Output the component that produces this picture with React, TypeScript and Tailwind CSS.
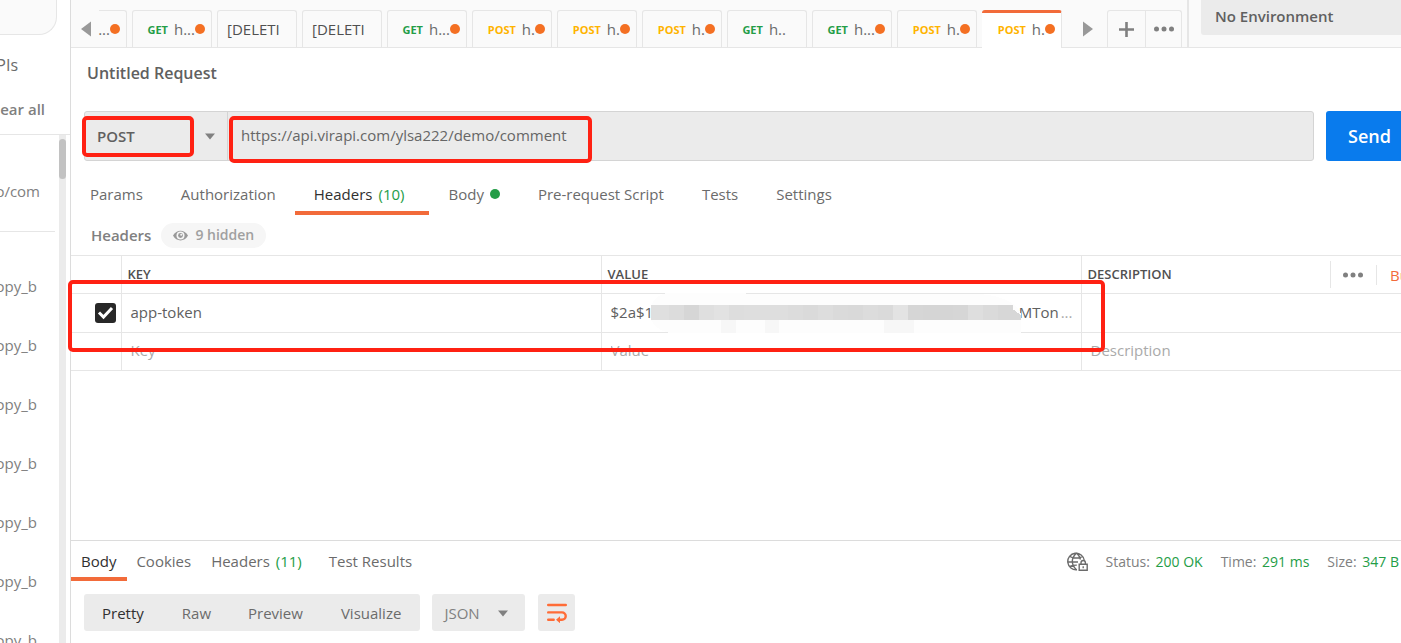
import type { ReactNode } from "react";

type Tab = { method?: "GET" | "POST"; label: string; unsaved?: boolean; active?: boolean };

const tabs: Tab[] = [
  { method: "GET", label: "h...", unsaved: true },
  { label: "[DELETI" },
  { label: "[DELETI" },
  { method: "GET", label: "h...", unsaved: true },
  { method: "POST", label: "h.", unsaved: true },
  { method: "POST", label: "h.", unsaved: true },
  { method: "POST", label: "h.", unsaved: true },
  { method: "GET", label: "h.." },
  { method: "GET", label: "h...", unsaved: true },
  { method: "POST", label: "h.", unsaved: true },
  { method: "POST", label: "h.", unsaved: true, active: true },
];

const history = ["opy_b", "opy_b", "opy_b", "opy_b", "opy_b", "opy_b", "opy_b"];

function Dots() {
  return (
    <svg width="20" height="6" viewBox="0 0 20 6" fill="#808080" aria-hidden="true">
      <circle cx="2.5" cy="3" r="2.5" />
      <circle cx="10" cy="3" r="2.5" />
      <circle cx="17.5" cy="3" r="2.5" />
    </svg>
  );
}

function Caret() {
  return (
    <svg width="10" height="7" viewBox="0 0 10 7" fill="#808080" aria-hidden="true">
      <path d="M0 0.5h10L5 6.5z" />
    </svg>
  );
}

function UnsavedDot() {
  return <span className="size-2.5 shrink-0 rounded-full bg-[#f47023]" />;
}

function RequestTab({ tab }: { tab: Tab }) {
  const frame = tab.active
    ? "border-t-[3px] border-t-[#f26b3a] border-r border-r-[#e6e6e6] bg-white h-[38px] pb-[3px]"
    : "border border-b-0 border-[#e6e6e6] bg-[#fafafa] h-[37px]";
  return (
    <button className={`flex w-20 shrink-0 items-center rounded-t-[3px] ${frame} ${tab.method ? "justify-end pr-1.5" : "pl-[9px]"}`}>
      {tab.method && (
        <span className={`mr-1.5 pt-0.5 text-[11px] font-bold ${tab.method === "GET" ? "text-[#249d47]" : "text-[#ffb400]"}`}>
          {tab.method}
        </span>
      )}
      <span className={`text-[15px] ${tab.method ? "text-[#6b6b6b]" : "text-[#505050]"}`}>{tab.label}</span>
      {tab.unsaved ? <UnsavedDot /> : tab.method && <span className="w-3.5" />}
    </button>
  );
}

function Sidebar() {
  return (
    <aside className="flex w-[71px] shrink-0 flex-col border-r border-[#dcdcdc] bg-white text-[15px] text-[#808080]">
      <div className="h-[35px] w-[57px] rounded-br-[18px] border-r border-b border-[#e6e6e6] bg-[#fafafa]" />
      <div className="flex h-[59px] w-[18px] items-center justify-end overflow-hidden text-base text-[#6b6b6b]">PIs</div>
      <button className="flex h-[30px] w-[45px] items-center justify-end overflow-hidden font-semibold whitespace-nowrap">ear all</button>
      <div className="mt-2.5 flex min-h-0 flex-1 border-t border-[#e6e6e6]">
        <div className="flex w-[59px] flex-col overflow-hidden">
          <div className="flex h-[97px] w-[55px] shrink-0 items-center justify-end overflow-hidden border-b border-[#e6e6e6] pt-4 pr-[15px]">o/com</div>
          <ul className="flex flex-col pt-[25px]">
            {history.map((name, i) => (
              <li key={i} className="flex h-[59px] w-[37px] shrink-0 items-center justify-end overflow-hidden">{name}</li>
            ))}
          </ul>
        </div>
        <div className="w-[7px] bg-[#ebebeb] pt-1">
          <div className="h-10 rounded bg-[#c2c2c2]" />
        </div>
      </div>
    </aside>
  );
}

function TopBar() {
  return (
    <div className="flex h-12 shrink-0 bg-[#fafafa]">
      <div className="flex min-w-0 flex-1 items-end border-b border-[#e6e6e6]">
        <button aria-label="Scroll tabs left" className="flex h-[37px] w-7 shrink-0 items-center pl-2.5">
          <svg width="10" height="16" viewBox="0 0 10 16" fill="#999"><path d="M10 0.5v15L0 8z" /></svg>
        </button>
        <div className="-mb-px flex items-start gap-[5px]">
          <button className="flex h-[37px] w-7 shrink-0 items-center justify-end rounded-tr-[3px] border-t border-r border-[#e6e6e6] pr-1.5 text-[15px] text-[#6b6b6b]">
            ...<UnsavedDot />
          </button>
          {tabs.map((tab, i) => <RequestTab key={i} tab={tab} />)}
        </div>
        <button aria-label="Scroll tabs right" className="flex h-[37px] w-[45px] shrink-0 items-center pl-[21px]">
          <svg width="10" height="16" viewBox="0 0 10 16" fill="#999"><path d="M0 0.5v15L10 8z" /></svg>
        </button>
        <div className="flex h-[37px] shrink-0 rounded-t-[3px] border border-b-0 border-[#e6e6e6]">
          <button aria-label="New tab" className="flex w-[38px] items-center justify-center border-r border-[#e6e6e6]">
            <svg width="15" height="15" viewBox="0 0 15 15" stroke="#808080" strokeWidth="2.6"><path d="M7.5 0v15M0 7.5h15" /></svg>
          </button>
          <button aria-label="Tab options" className="flex w-[35px] items-center justify-center"><Dots /></button>
        </div>
      </div>
      <div className="w-[214px] shrink-0 border-b border-l-2 border-[#e6e6e6] pl-3">
        <button className="flex h-[35px] w-full items-center rounded-bl-[3px] bg-[#ebebeb] pb-[3px] pl-3.5 text-[15px] font-semibold text-[#606060]">
          No Environment
        </button>
      </div>
    </div>
  );
}

function UrlBar() {
  return (
    <div className="flex h-[50px] pl-[13px]">
      <div className="flex min-w-0 flex-1 rounded-[3px] border border-[#d4d4d4] bg-[#ebebeb]">
        <button className="relative flex w-[143px] shrink-0 items-center justify-between border-r border-[#d4d4d4] px-3 text-[15px] font-semibold text-[#606060]">
          POST
          <Caret />
          <span className="pointer-events-none absolute top-1 -left-[3px] h-[41px] w-28 rounded-[5px] border-4 border-[#ff2113]" />
        </button>
        <div className="relative min-w-0 flex-1">
          <input
            aria-label="Request URL"
            defaultValue="https://api.virapi.com/ylsa222/demo/comment"
            className="h-full w-full bg-transparent pb-0.5 pl-[13px] text-[15px] text-[#666] outline-none"
          />
          <span className="pointer-events-none absolute top-1 left-px h-[47px] w-[363px] rounded-[5px] border-4 border-[#ff2113]" />
        </div>
      </div>
      <button className="ml-3 w-[75px] shrink-0 rounded-l-[3px] bg-[#097bed] pl-3 text-lg font-semibold text-white">Send</button>
    </div>
  );
}

function SectionTab({ children, active }: { children: ReactNode; active?: boolean }) {
  return (
    <button className={`flex items-center border-b-4 px-[19px] pt-1 ${active ? "border-[#f26b3a] text-[#303030]" : "border-transparent"}`}>
      {children}
    </button>
  );
}

const mosaic = [
  "#dfdfdf", "#dcdcdc", "#d6d6d6", "#dfdfdf", "#e2e2e2", "#dddddd", "#dedede", "#dedede", "#dedede", "#dcdcdc", "#dadada", "#dddddd",
  "#dadada", "#d9d9d9", "#dcdcdc", "#dadada", "#e3e3e3", "#d6d6d6", "#d5d5d5", "#d5d5d5", "#d6d6d6", "#dedede", "#dadada", "#d7d7d7",
];

function HeadersTable() {
  const cell = "border-r border-[#e6e6e6] p-0 text-left";
  const field = "w-full pb-0.5 pl-[9px] outline-none placeholder:text-[#aaa]";
  return (
    <div className="relative">
      <table className="w-full table-fixed border-collapse text-[15px]">
        <colgroup>
          <col className="w-[50px]" />
          <col className="w-[480px]" />
          <col className="w-[480px]" />
          <col />
        </colgroup>
        <thead>
          <tr className="h-[38px] border-y border-[#e6e6e6] text-[13px] text-[#505050]">
            <th className={cell} aria-label="Enabled" />
            <th className={`${cell} pl-1.5 font-semibold`}>KEY</th>
            <th className={`${cell} pl-1.5 font-semibold`}>VALUE</th>
            <th className="p-0 pl-1.5 text-left font-semibold">
              <div className="flex items-center justify-between">
                DESCRIPTION
                <div className="flex items-center">
                  <button aria-label="Column options" className="flex h-[27px] items-center border-l border-[#e6e6e6] pr-[13px] pl-3"><Dots /></button>
                  <button className="h-5 w-[25px] overflow-hidden border-l border-[#e6e6e6] pl-[13px] text-left text-[15px] leading-5 font-normal whitespace-nowrap text-[#f26b3a]">Bulk</button>
                </div>
              </div>
            </th>
          </tr>
        </thead>
        <tbody>
          <tr className="h-[39px] border-b border-[#e6e6e6] text-[#606060]">
            <td className={cell}>
              <label className="relative ml-6 block h-5 w-[21px]">
                <input type="checkbox" defaultChecked aria-label="Enable app-token" className="block h-5 w-[21px] appearance-none rounded-[3px] bg-[#282828]" />
                <svg className="pointer-events-none absolute top-0 left-0" width="21" height="20" viewBox="0 0 21 20" fill="none" stroke="white" strokeWidth="3">
                  <path d="M4 9.5l4.5 4.5L17 5" />
                </svg>
              </label>
            </td>
            <td className={`${cell} pb-0.5 pl-[9px]`}>app-token</td>
            <td className={`${cell} pl-[9px]`}>
              <div className="flex h-[38px] items-center">
                <span className="pb-0.5">$2a$1</span>
                <span className="relative -mx-0.5 h-[38px] flex-1">
                  <svg className="absolute -top-px left-0 h-10 w-full" viewBox="0 0 371 40" preserveAspectRatio="none" shapeRendering="crispEdges" aria-hidden="true">
                    <path d="M0 14Q4 1 18 0H95V1H330Q364 4 371 20V40H18Q4 36 0 27z" fill="#fdfdfd" />
                    {mosaic.map((fill, i) => <rect key={i} x={i * 15 + (i > 0 ? 3 : 0)} y="12" width={i === 0 ? 18 : 15} height="15" fill={fill} />)}
                    <path d="M363 16l8 6v5h-8z" fill="#d7d7d7" />
                    <path d="M70 27h15v13h-15zM114 27h15v13h-15zM234 27h30v13h-30z" fill="#f7f7f7" />
                  </svg>
                </span>
                <span className="pb-0.5">MTon</span>
                <span className="mr-2 ml-0.5 pb-0.5 text-[#aaa]">...</span>
              </div>
            </td>
            <td className="p-0" />
          </tr>
          <tr className="h-[38px] border-b border-[#e6e6e6]">
            <td className={cell} />
            <td className={cell}><input aria-label="New key" placeholder="Key" className={field} /></td>
            <td className={cell}><input aria-label="New value" placeholder="Value" className={field} /></td>
            <td className="p-0"><input aria-label="New description" placeholder="Description" className={field} /></td>
          </tr>
        </tbody>
      </table>
      <span className="pointer-events-none absolute top-[25px] -left-[3px] h-[72px] w-[1037px] rounded-[5px] border-4 border-[#ff2113]" />
    </div>
  );
}

function ResponsePane() {
  return (
    <section className="h-[103px] shrink-0 border-t border-[#dcdcdc] text-[15px] text-[#6b6b6b]">
      <div className="flex h-10 items-stretch justify-between">
        <nav className="flex">
          <button className="border-b-4 border-[#f26b3a] pt-1 pr-[11px] pl-2.5 text-[#303030]">Body</button>
          <button className="border-b-4 border-transparent pt-1 pr-[11px] pl-[9px]">Cookies</button>
          <button className="border-b-4 border-transparent pt-1 pr-4 pl-[9px]">Headers <span className="ml-0.5 text-[#249d47]">(11)</span></button>
          <button className="border-b-4 border-transparent px-[11px] pt-1">Test Results</button>
        </nav>
        <div className="flex items-center gap-[18px] pt-0.5 pr-0.5 text-sm whitespace-nowrap text-[#808080]">
          <svg width="21" height="20" viewBox="0 0 21 20" fill="none" stroke="#6b6b6b" strokeWidth="1.4" aria-hidden="true">
            <path d="M10 17.8A8.3 8.3 0 1 1 17.3 8.5M9.5 1C6.5 4 5.2 7 5.3 9.5S6.5 15 9.5 17.8M9.5 1c2 1.8 3.5 4.2 4 6.5M2.8 4.5C6 6.5 12.5 6.5 15.7 4.5M1 10h10M2.8 14.5c2-1 4-1.4 7-1.4" />
            <path d="M12.2 12.3h8v6h-8zM14 12.3v-1.6a2.2 2.2 0 0 1 4.4 0v1.6M16.2 14.3v2" />
          </svg>
          <span>Status: <span className="ml-0.5 text-[#249d47]">200 OK</span></span>
          <span>Time: <span className="ml-0.5 text-[#249d47]">291 ms</span></span>
          <span>Size: <span className="ml-0.5 text-[#249d47]">347 B</span></span>
        </div>
      </div>
      <div className="mt-[13px] flex h-[37px] pl-[13px]">
        <div className="flex rounded-[3px] bg-[#ebebeb] pt-0.5">
          <button className="pr-5 pl-[18px] text-[#303030]">Pretty</button>
          <button className="px-[18px]">Raw</button>
          <button className="px-[19px]">Preview</button>
          <button className="pr-[19px] pl-[19px]">Visualize</button>
        </div>
        <button className="ml-3 flex w-[93px] items-center justify-between rounded-[3px] bg-[#ebebeb] pt-0.5 pr-[17px] pl-3 text-[#808080]">
          JSON <Caret />
        </button>
        <button aria-label="Wrap lines" className="ml-[13px] flex w-[37px] items-center justify-center rounded-[3px] bg-[#ebebeb]">
          <svg width="20" height="20" viewBox="0 0 20 20" fill="none" stroke="#ff6c37" strokeWidth="2.4" strokeLinecap="round">
            <path d="M1.2 2h17.6M1.2 9.4h13.8a3.7 3.7 0 0 1 0 7.4h-3M1.200 16.800h5.500" />
            <path d="M9 16.800l4-3.600v7z" fill="#ff6c37" stroke="none" />
          </svg>
        </button>
      </div>
    </section>
  );
}

export default function App() {
  return (
    <div className="flex h-screen overflow-hidden bg-white font-['Open_Sans',sans-serif]">
      <Sidebar />
      <main className="flex min-w-0 flex-1 flex-col">
        <TopBar />
        <section className="flex min-h-0 flex-1 flex-col">
          <h1 className="pt-[13px] pb-[26px] pl-4 text-base leading-6 font-semibold text-[#606060]">Untitled Request</h1>
          <UrlBar />
          <nav className="mt-3 flex h-[42px] text-[15px] text-[#6b6b6b]">
            <SectionTab>Params</SectionTab>
            <SectionTab>Authorization</SectionTab>
            <SectionTab active>Headers <span className="mr-1.5 ml-1.5 text-[#249d47]">(10)</span></SectionTab>
            <SectionTab>Body <span className="ml-1.5 size-2.5 rounded-full bg-[#249d47]" /></SectionTab>
            <SectionTab>Pre-request Script</SectionTab>
            <SectionTab>Tests</SectionTab>
            <SectionTab>Settings</SectionTab>
          </nav>
          <div className="flex h-10 items-center pl-5">
            <h2 className="text-[15px] font-semibold text-[#808080]">Headers</h2>
            <button className="ml-2.5 flex h-[25px] items-center gap-[7px] rounded-full bg-[#f6f6f6] px-3 text-sm font-semibold text-[#a0a0a0]">
              <svg width="15" height="11" viewBox="0 0 15 11" aria-hidden="true">
                <path d="M0 5.5C3.500-1 11.500-1 15 5.500 11.500 12 3.500 12 0 5.500z" fill="#999" />
                <circle cx="7.5" cy="5.5" r="4" fill="#f6f6f6" />
                <circle cx="7.5" cy="5.5" r="2.4" fill="#999" />
                <circle cx="8.2" cy="4.7" r="1" fill="#f6f6f6" />
              </svg>
              9 hidden
            </button>
          </div>
          <HeadersTable />
        </section>
        <ResponsePane />
      </main>
    </div>
  );
}
